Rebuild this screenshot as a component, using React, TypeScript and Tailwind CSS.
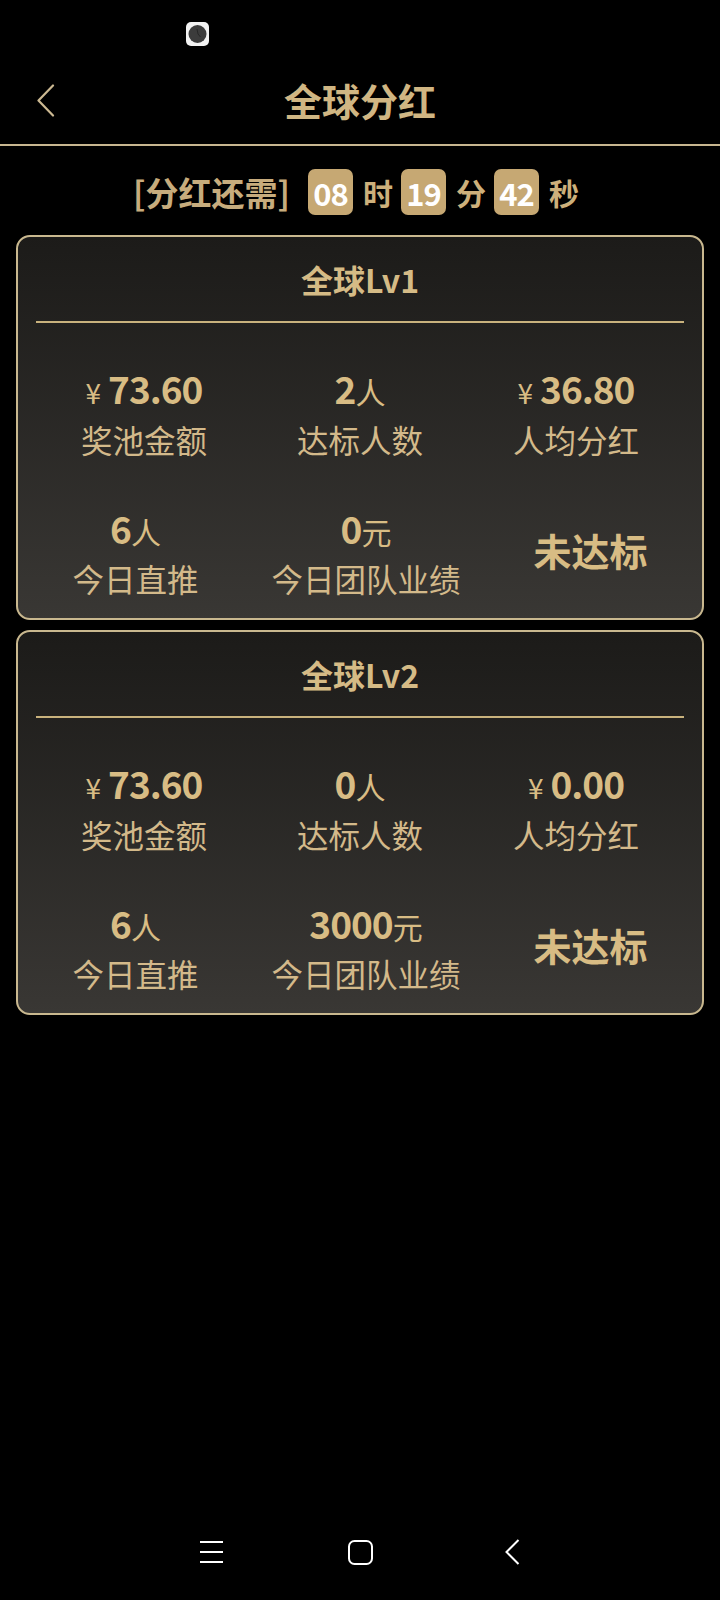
import React from "react";

type Stat = { cur?: boolean; num: string; unit?: string; label: string };

function Value({ s }: { s: Stat }) {
  return (
    <div className="flex items-baseline justify-center h-[40px] leading-[40px] text-[#d8bc84] whitespace-nowrap">
      {s.cur && <span className="text-[28px] font-normal mr-[7px]">¥</span>}
      <span className="text-[37px] font-bold tracking-[-1px]">{s.num}</span>
      {s.unit && <span className="text-[30px] font-normal">{s.unit}</span>}
    </div>
  );
}

function Item({ s, gap }: { s: Stat; gap: string }) {
  return (
    <div className="flex flex-col items-center">
      <Value s={s} />
      <div className={`${gap} h-[40px] leading-[40px] text-[31.5px] text-[#d3b98a] whitespace-nowrap`}>{s.label}</div>
    </div>
  );
}

function Card({ title, row1, row2, top }: { title: string; row1: Stat[]; row2: Stat[]; top: string }) {
  return (
    <div className={`mx-4 ${top} rounded-[14px] border-2 border-[#c9b88f] bg-linear-to-b from-[#1c1b19] to-[#393734] px-[18px]`}>
      <div className="h-[84px] flex items-center justify-center text-[32px] font-bold text-[#d5bb86]">{title}</div>
      <div className="h-[2px] bg-[#c9b27d]" />
      <div className="mt-[45px] flex justify-around">
        {row1.map((s, i) => (
          <Item key={i} s={s} gap="mt-[11px]" />
        ))}
      </div>
      <div className="mt-[49px] mb-[20px] flex justify-around items-center">
        {row2.map((s, i) => (
          <Item key={i} s={s} gap="mt-[10px]" />
        ))}
        <div className="mb-[6px] text-[38px] font-bold text-[#d8bc84] leading-[40px] whitespace-nowrap">未达标</div>
      </div>
    </div>
  );
}

function Box({ v }: { v: string }) {
  return (
    <div className="w-[45px] h-[46px] rounded-[7px] bg-[#c6a873] flex items-center justify-center text-white text-[31px] font-bold leading-none tracking-[-1px]">
      {v}
    </div>
  );
}

export default function App() {
  return (
    <div className="w-[720px] h-[1600px] bg-black flex flex-col font-['Noto_Sans_CJK_SC',sans-serif]">
      {/* status bar */}
      <div className="h-[60px] pl-[186px] pt-[22px]">
        <svg width="23" height="24" viewBox="0 0 23 24">
          <rect x="0" y="0" width="23" height="24" rx="5" fill="#f2f2f2" />
          <circle cx="11.5" cy="12" r="9" fill="#3c3c3c" />
          <path d="M11 7 L12 12 L14.5 15" stroke="#222" strokeWidth="0.8" fill="none" />
        </svg>
      </div>
      {/* header */}
      <div className="h-[84px] pb-[4px] flex items-center relative">
        <svg className="absolute left-[36px] top-[24px]" width="20" height="33" viewBox="0 0 20 33">
          <path d="M17 1.5 L2.5 16.5 L17 31.5" stroke="#ccb992" strokeWidth="2.2" fill="none" strokeLinecap="round" strokeLinejoin="round" />
        </svg>
        <div className="w-full text-center text-[38px] font-bold text-[#d0b683] leading-none">全球分红</div>
      </div>
      <div className="h-[2px] bg-[#c7b690]" />
      {/* countdown */}
      <div className="mt-[23px] h-[46px] flex items-center justify-center">
        <span className="text-[33px] font-bold text-[#c7ac7d] leading-none">[分红还需]</span>
        <div className="ml-[18px]"><Box v="08" /></div>
        <span className="ml-[10px] mr-[8px] text-[30px] font-bold text-[#cdb07b] leading-none">时</span>
        <Box v="19" />
        <span className="ml-[10px] mr-[8px] text-[30px] font-bold text-[#cdb07b] leading-none">分</span>
        <Box v="42" />
        <span className="ml-[10px] mr-[8px] text-[30px] font-bold text-[#cdb07b] leading-none">秒</span>
      </div>

      <Card
        top="mt-[20px]"
        title="全球Lv1"
        row1={[
          { cur: true, num: "73.60", label: "奖池金额" },
          { num: "2", unit: "人", label: "达标人数" },
          { cur: true, num: "36.80", label: "人均分红" },
        ]}
        row2={[
          { num: "6", unit: "人", label: "今日直推" },
          { num: "0", unit: "元", label: "今日团队业绩" },
        ]}
      />
      <Card
        top="mt-[10px]"
        title="全球Lv2"
        row1={[
          { cur: true, num: "73.60", label: "奖池金额" },
          { num: "0", unit: "人", label: "达标人数" },
          { cur: true, num: "0.00", label: "人均分红" },
        ]}
        row2={[
          { num: "6", unit: "人", label: "今日直推" },
          { num: "3000", unit: "元", label: "今日团队业绩" },
        ]}
      />

      {/* nav bar */}
      <div className="mt-auto h-[96px] flex items-center pl-[200px]">
        <svg width="23" height="22" viewBox="0 0 23 22">
          <path d="M0 1 H23 M0 11 H23 M0 21 H23" stroke="#fff" strokeWidth="2" />
        </svg>
        <svg className="ml-[125px]" width="25" height="25" viewBox="0 0 25 25">
          <rect x="1" y="1" width="23" height="23" rx="5.5" stroke="#fff" strokeWidth="2" fill="none" />
        </svg>
        <svg className="ml-[132px]" width="15" height="26" viewBox="0 0 15 26">
          <path d="M13.5 1 L1.5 13 L13.5 25" stroke="#fff" strokeWidth="2" fill="none" />
        </svg>
      </div>
    </div>
  );
}
